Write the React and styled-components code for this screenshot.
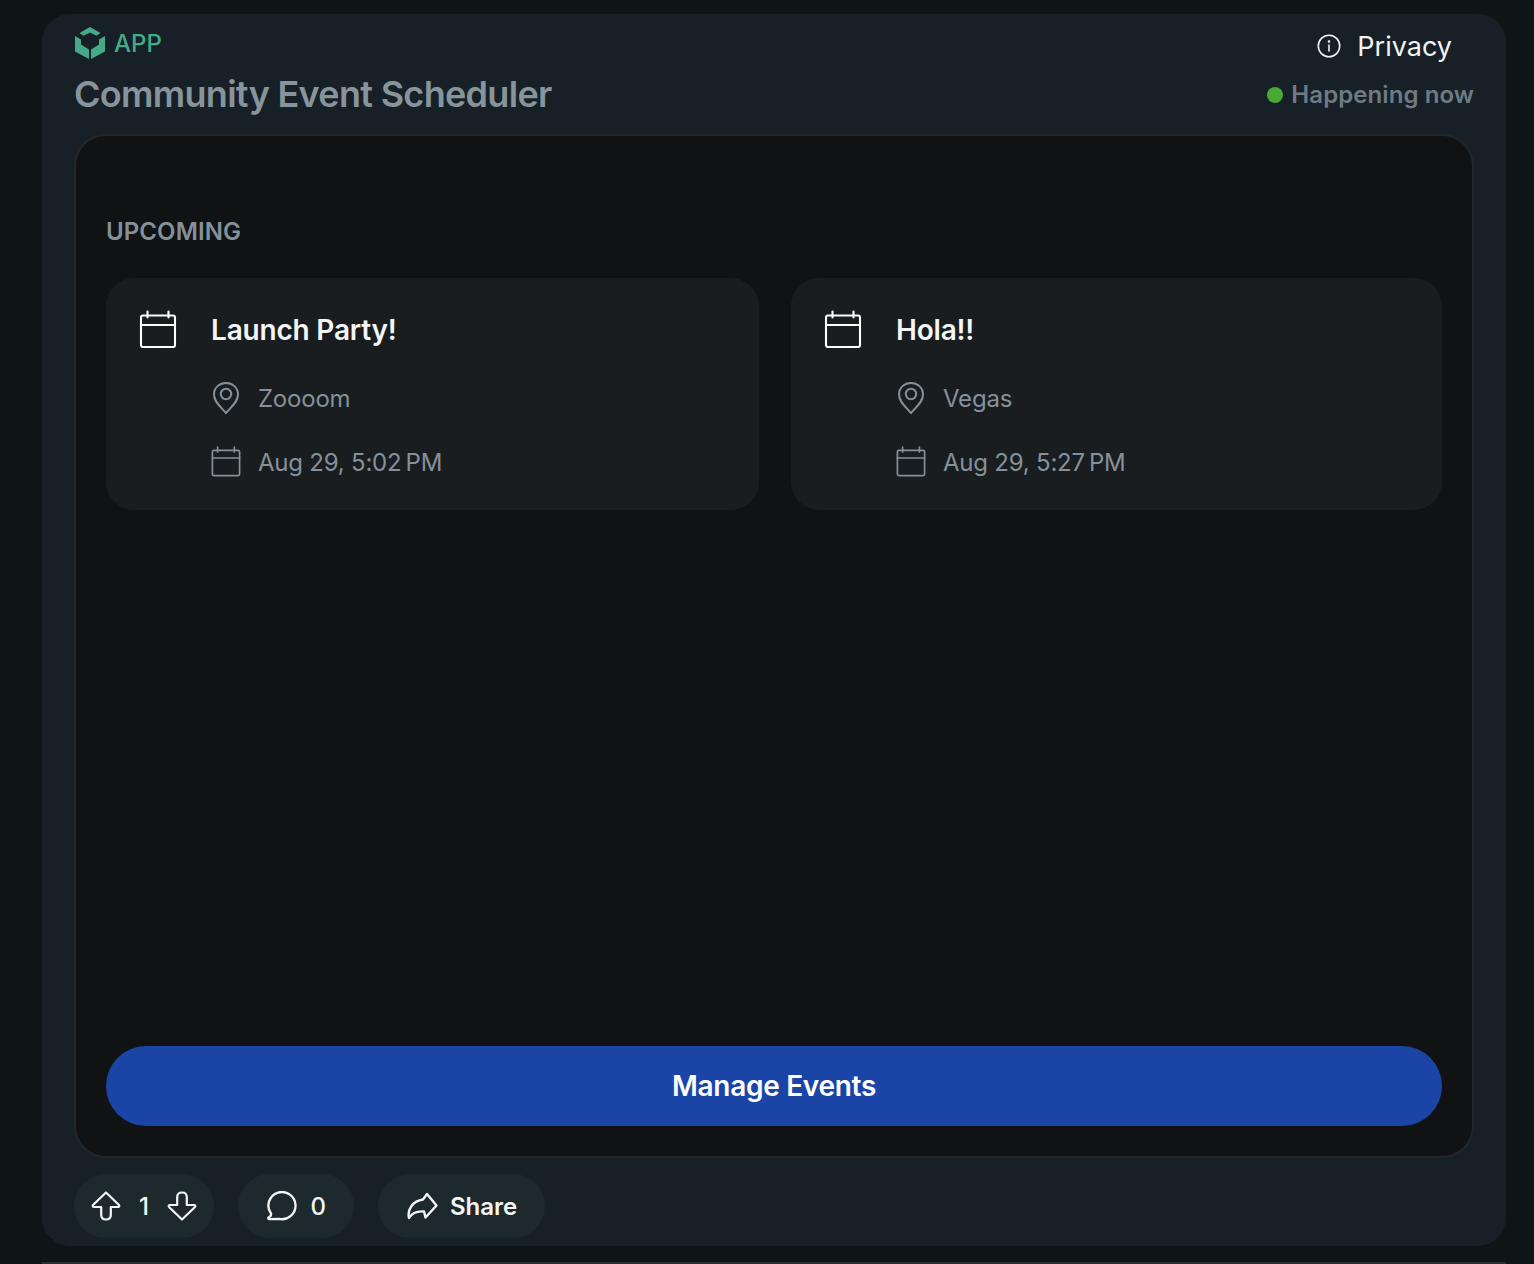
import React from "react";
import styled, { createGlobalStyle } from "styled-components";

const Global = createGlobalStyle`
  html, body { margin: 0; padding: 0; background: #0d1516; }
  body { font-family: Inter, "Liberation Sans", sans-serif; -webkit-font-smoothing: antialiased; }
  * { box-sizing: border-box; }
`;
const Page = styled.div`
  width: 1534px; height: 1264px; overflow: hidden;
  padding: 14px 28px 0 42px;
  display: flex; flex-direction: column;
`;
const Frame = styled.main`
  height: 1232px; background: #172027; border-radius: 28px;
  padding: 0 32px; display: flex; flex-direction: column;
`;
const BottomRule = styled.div`
  height: 2px; margin-top: 16px; background: #2b2f31;
`;
const Header = styled.header`
  height: 120px; display: flex; justify-content: space-between;
`;
const TitleBlock = styled.div`
  display: flex; flex-direction: column; padding-top: 13px;
`;
const Brand = styled.div`
  display: flex; align-items: center; gap: 9px; height: 32px; padding-left: 1px;
  color: #46a987; font-size: 24px; font-weight: 500; line-height: 32px; letter-spacing: 0.1px;
`;
const Nudge = styled.span`
  padding-top: 2px;
`;
const Title = styled.h1`
  margin: 13px 0 0; color: #87949c; font-size: 36px; line-height: 44px; font-weight: 600; letter-spacing: -0.7px;
`;
const Side = styled.div`
  display: flex; flex-direction: column; align-items: flex-end; padding-top: 14px;
`;
const PrivacyLink = styled.div`
  display: flex; align-items: center; gap: 16px; padding-right: 22px; height: 36px;
  color: #f2f4f5; font-size: 27px; line-height: 36px; font-weight: 400;
`;
const Live = styled.div`
  display: flex; align-items: center; gap: 8px; margin-top: 13px; height: 36px;
  color: #6f7b83; font-size: 24px; font-weight: 600; line-height: 36px; letter-spacing: 0.08px;
`;
const Dot = styled.span`
  width: 16px; height: 16px; border-radius: 50%; background: #4aa835;
`;
const Panel = styled.section`
  height: 1024px; background: #101214; border: 2px solid #242729; border-radius: 32px;
  padding: 0 30px 30px; display: flex; flex-direction: column;
`;
const SectionLabel = styled.h2`
  margin: 79px 0 0; height: 32px; color: #84919a; font-size: 24px; line-height: 33px; font-weight: 600; letter-spacing: 0.1px;
`;
const Grid = styled.div`
  margin-top: 31px; display: grid; grid-template-columns: 653px 651px; gap: 32px;
`;
const Card = styled.article`
  height: 232px; background: #191d20; border-radius: 28px;
  padding: 32px 32px 0 32px; display: grid; grid-template-columns: 40px 1fr; column-gap: 32px;
`;
const CardBody = styled.div`
  display: flex; flex-direction: column;
`;
const CardTitle = styled.h3`
  margin: 0; height: 40px; padding-left: 1px; color: #f4f5f6; font-size: 28px; line-height: 41px; font-weight: 600; letter-spacing: -0.2px;
`;
const Meta = styled.div`
  display: flex; align-items: center; gap: 16px; height: 36px; margin-top: ${p => p.$gap}px;
  color: #84919a; font-size: 24px; line-height: 36px; letter-spacing: -0.22px;
`;
const IconSlot = styled.span`
  width: 32px; display: flex; justify-content: center;
`;
const Spacer = styled.div`flex: 1;`;
const Primary = styled.button`
  height: 80px; border: 0; border-radius: 40px; background: #1a45a7; color: #fff;
  font: 600 28px/36px Inter, sans-serif; padding: 0; letter-spacing: -0.3px;
`;
const Footer = styled.footer`
  display: flex; gap: 24px; margin-top: 16px;
`;
const Pill = styled.div`
  height: 64px; border-radius: 32px; background: #1e292e; color: #f4f5f6;
  display: flex; align-items: center; padding: 0 ${p => p.$pad || 28}px;
  font-size: 24px; font-weight: 600; line-height: 32px; gap: ${p => p.$gap || 12}px;
`;
const Num = styled(Nudge)`font-weight: 500;`;

const CalendarIcon = ({ size = 40, color = "#fff" }) => (
  <svg width={size} height={size} viewBox="0 0 40 40" fill="none" stroke={color} strokeWidth="2.1" strokeLinecap="round" strokeLinejoin="round">
    <rect x="3" y="5.5" width="34" height="31.5" rx="2" />
    <path d="M3 15h34M9.5 1.5v6M30.5 1.5v6" />
  </svg>
);
const Pin = () => (
  <svg width="32" height="34" viewBox="0 0 32 34" fill="none" stroke="#84919a" strokeWidth="2">
    <path d="M16 32 C11 26 4 21 4 13.5 C4 6.5 9.5 2 16 2 C22.5 2 28 6.5 28 13.5 C28 21 21 26 16 32Z" strokeLinejoin="round" />
    <circle cx="16" cy="13" r="5.2" />
  </svg>
);
const Logo = () => (
  <svg width="30" height="32" viewBox="0 0 30 32" fill="#46a987">
    <path d="M15 0 L25.5 6 L21.5 8.8 L15 5.6 L8.5 8.8 L4.5 6 Z" />
    <path d="M0 9 L6 12.5 L6 17.5 L14 22.5 L14 32 L0 24.5 Z" />
    <path d="M30 9 L24 12.5 L24 17.5 L16 22.5 L16 32 L30 24.5 Z" />
  </svg>
);
const Info = () => (
  <svg width="24" height="24" viewBox="0 0 26 26" fill="none" stroke="#f2f4f5" strokeWidth="1.7" strokeLinecap="round">
    <circle cx="13" cy="13" r="11.6" />
    <path d="M13 12v6.5" />
    <circle cx="13" cy="8.2" r=".6" fill="#f2f4f5" />
  </svg>
);
const Up = ({ flip }) => (
  <svg width="30" height="30" viewBox="0 0 30 30" fill="none" stroke="#f4f5f6" strokeWidth="2.2" strokeLinejoin="round" style={flip ? { transform: "rotate(180deg)" } : undefined}>
    <path d="M15 1.5 L28 14 Q28.8 16 27 16 H19.8 V24 Q19.8 28.5 15 28.5 Q10.2 28.5 10.2 24 V16 H3 Q1.2 16 2 14 Z" />
  </svg>
);
const Bubble = () => (
  <svg width="31" height="30" viewBox="0 0 32 31" fill="none" stroke="#f4f5f6" strokeWidth="2.4" strokeLinejoin="round">
    <path d="M5.2 23.4 A14 14 0 1 1 13.5 28.8 L3 29 Q1.8 28.4 2.6 27.4 Q5.6 26 5.2 23.4Z" />
  </svg>
);
const ShareIcon = () => (
  <svg width="32" height="28" viewBox="0 0 32 28" fill="none" stroke="#f4f5f6" strokeWidth="2.4" strokeLinejoin="round">
    <path d="M21 2 L30.5 13.5 L19.5 25.5 L18 19.5 C12 19 6 21 3 26 C1 17 7 9 17 7.5 Z" />
  </svg>
);

const events = [
  { title: "Launch Party!", place: "Zoooom", when: "Aug 29, 5:02\u202fPM" },
  { title: "Hola!!", place: "Vegas", when: "Aug 29, 5:27\u202fPM" },
];

export default function App() {
  return (
    <Page>
      <Global />
      <Frame>
        <Header>
          <TitleBlock>
            <Brand><Logo /><Nudge>APP</Nudge></Brand>
            <Title>Community Event Scheduler</Title>
          </TitleBlock>
          <Side>
            <PrivacyLink><Info /><Nudge>Privacy</Nudge></PrivacyLink>
            <Live><Dot />Happening now</Live>
          </Side>
        </Header>
        <Panel>
          <SectionLabel>UPCOMING</SectionLabel>
          <Grid>
            {events.map(e => (
              <Card key={e.title}>
                <CalendarIcon />
                <CardBody>
                  <CardTitle>{e.title}</CardTitle>
                  <Meta $gap={30}><IconSlot><Pin /></IconSlot><Nudge>{e.place}</Nudge></Meta>
                  <Meta $gap={28}><IconSlot><CalendarIcon size={32} color="#84919a" /></IconSlot><Nudge>{e.when}</Nudge></Meta>
                </CardBody>
              </Card>
            ))}
          </Grid>
          <Spacer />
          <Primary>Manage Events</Primary>
        </Panel>
        <Footer>
          <Pill $pad={17} $gap={18}><Up /><Num>1</Num><Up flip /></Pill>
          <Pill $gap={13.5}><Bubble /><Num>0</Num></Pill>
          <Pill><ShareIcon /><Nudge>Share</Nudge></Pill>
        </Footer>
      </Frame>
      <BottomRule />
    </Page>
  );
}
